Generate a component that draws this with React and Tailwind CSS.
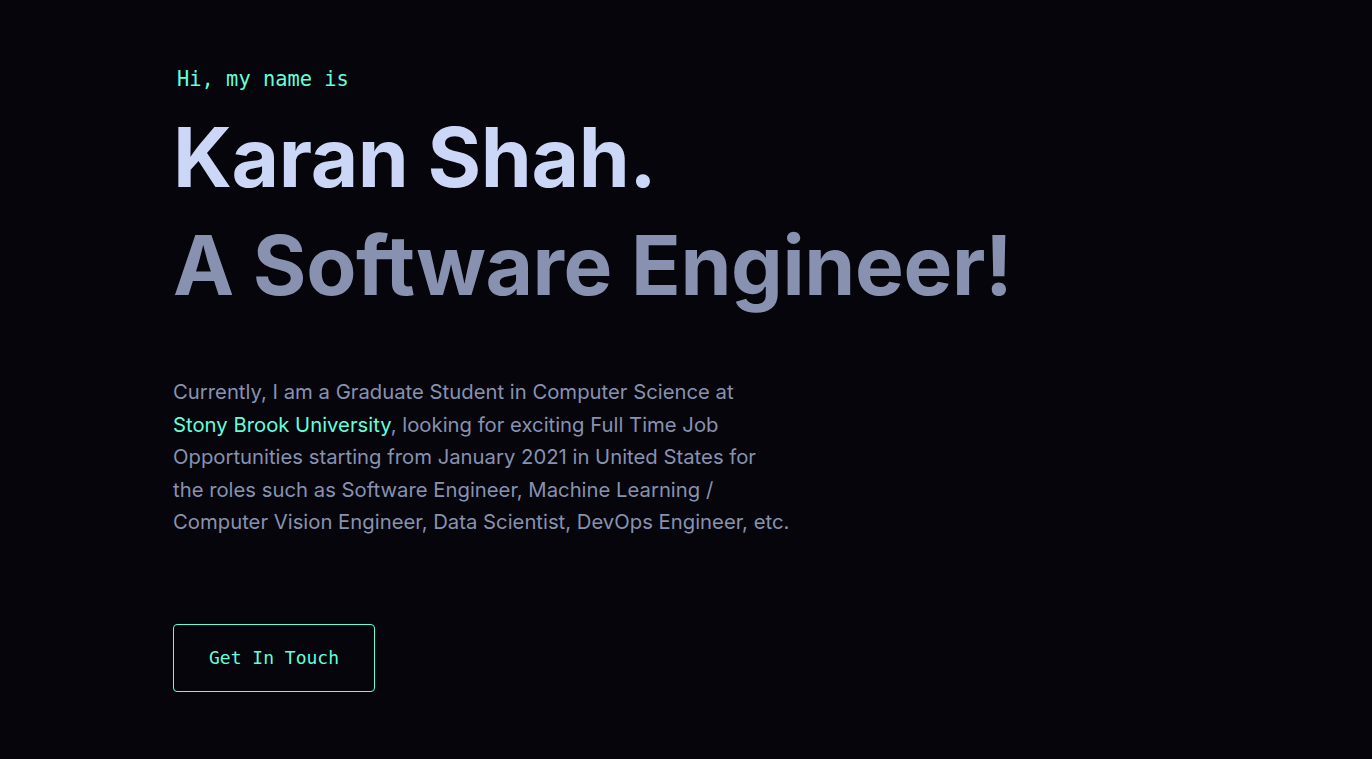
import React from "react";

const mono = "font-['DejaVu_Sans_Mono','Liberation_Mono',monospace]";

const Hero = () => {
  return (
    <section className="min-h-screen bg-[#05050b] px-[173px] pt-[66px] font-['Inter','Noto_Sans',sans-serif]">
      <p className={`${mono} text-[20.4px] leading-[26px] text-[#64ffda] pl-[4px]`}>
        Hi, my name is
      </p>
      <h1 className="mt-[12px] text-[82px] leading-[108px] font-bold tracking-[-0.4px] text-[#ccd6f6]">
        Karan Shah.
      </h1>
      <h2 className="text-[82px] leading-[108px] font-bold tracking-[-0.4px] text-[#8892b0]">
        A Software Engineer!
      </h2>
      <p className="mt-[56px] whitespace-nowrap text-[20.3px] leading-[32.5px] text-[#8892b0]">
        Currently, I am a Graduate Student in Computer Science at
        <br />
        <a href="#" className="text-[#64ffda]">
          Stony Brook University
        </a>
        , looking for exciting Full Time Job
        <br />
        Opportunities starting from January 2021 in United States for
        <br />
        the roles such as Software Engineer, Machine Learning /
        <br />
        Computer Vision Engineer, Data Scientist, DevOps Engineer, etc.
      </p>
      <a
        href="#"
        className={`${mono} mt-[85px] flex h-[68px] w-[202px] items-center justify-center rounded-[4px] border border-[#64ffda] text-[18px] text-[#64ffda]`}
      >
        Get In Touch
      </a>
    </section>
  );
};

export default function App() {
  return <Hero />;
}
